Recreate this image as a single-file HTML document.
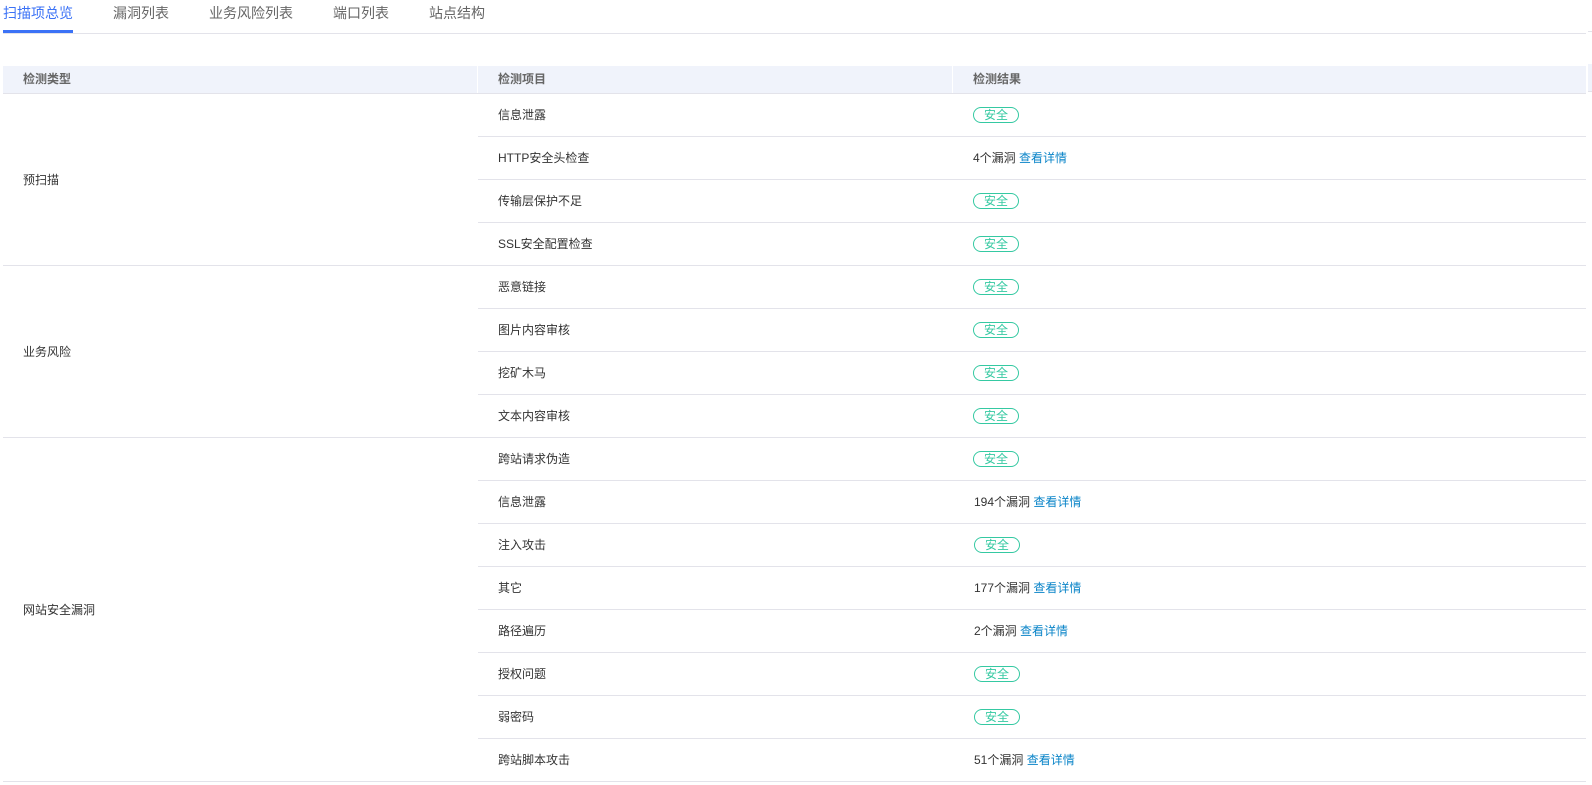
<!DOCTYPE html>
<html lang="zh">
<head>
<meta charset="utf-8">
<title>扫描项总览</title>
<style>
html,body{margin:0;padding:0;background:#fff;width:1592px;height:785px;overflow:hidden}
body{position:relative;font-family:"Liberation Sans","Noto Sans CJK SC",sans-serif;font-size:12px;color:#333}
.a{position:absolute;white-space:nowrap}
.tab{top:3px;font-size:14px;line-height:20px;color:#666}
.tab.on{color:#3b72f6}
.line{position:absolute;height:1px;background:#e3e3ea}
.t{line-height:18px}
.h{top:70px;color:#666;font-weight:bold;line-height:18px}
.badge{position:absolute;left:973px;width:44px;height:14px;border:1px solid #35c9a2;border-radius:8px;color:#35c9a2;line-height:14px;text-align:center}
.link{color:#0a84c8}
</style>
</head>
<body>
<div class="a tab on" style="left:3px">扫描项总览</div>
<div class="a tab" style="left:113px">漏洞列表</div>
<div class="a tab" style="left:209px">业务风险列表</div>
<div class="a tab" style="left:333px">端口列表</div>
<div class="a tab" style="left:429px">站点结构</div>
<div class="line" style="left:3px;top:33px;width:1583px"></div>
<div class="a" style="left:3px;top:30px;width:70px;height:3px;background:#3b72f6"></div>
<div class="a" style="left:1588px;top:31px;width:4px;height:1px;background:#e3e3ea"></div>

<div class="a" style="left:3px;top:66px;width:474px;height:27px;background:#f0f3fb"></div>
<div class="a" style="left:478px;top:66px;width:474px;height:27px;background:#f0f3fb"></div>
<div class="a" style="left:953px;top:66px;width:633px;height:27px;background:#f0f3fb"></div>
<div class="a" style="left:1588px;top:64px;width:4px;height:27px;background:#f0f3fb"></div>
<div class="a" style="left:1588px;top:91px;width:4px;height:1px;background:#e3e3ea"></div>
<div class="line" style="left:3px;top:93px;width:1583px"></div>
<div class="a h" style="left:23px">检测类型</div>
<div class="a h" style="left:498px">检测项目</div>
<div class="a h" style="left:973px">检测结果</div>

<div class="a t" style="left:23px;top:171px">预扫描</div>
<div class="a t" style="left:23px;top:343px">业务风险</div>
<div class="a t" style="left:23px;top:601px">网站安全漏洞</div>

<div class="line" style="left:478px;top:136px;width:1108px"></div>
<div class="line" style="left:478px;top:179px;width:1108px"></div>
<div class="line" style="left:478px;top:222px;width:1108px"></div>
<div class="line" style="left:3px;top:265px;width:1583px"></div>
<div class="line" style="left:478px;top:308px;width:1108px"></div>
<div class="line" style="left:478px;top:351px;width:1108px"></div>
<div class="line" style="left:478px;top:394px;width:1108px"></div>
<div class="line" style="left:3px;top:437px;width:1583px"></div>
<div class="line" style="left:478px;top:480px;width:1108px"></div>
<div class="line" style="left:478px;top:523px;width:1108px"></div>
<div class="line" style="left:478px;top:566px;width:1108px"></div>
<div class="line" style="left:478px;top:609px;width:1108px"></div>
<div class="line" style="left:478px;top:652px;width:1108px"></div>
<div class="line" style="left:478px;top:695px;width:1108px"></div>
<div class="line" style="left:478px;top:738px;width:1108px"></div>
<div class="line" style="left:3px;top:781px;width:1583px"></div>

<div class="a t" style="left:498px;top:106px">信息泄露</div>
<div class="a t" style="left:498px;top:149px">HTTP安全头检查</div>
<div class="a t" style="left:498px;top:192px">传输层保护不足</div>
<div class="a t" style="left:498px;top:235px">SSL安全配置检查</div>
<div class="a t" style="left:498px;top:278px">恶意链接</div>
<div class="a t" style="left:498px;top:321px">图片内容审核</div>
<div class="a t" style="left:498px;top:364px">挖矿木马</div>
<div class="a t" style="left:498px;top:407px">文本内容审核</div>
<div class="a t" style="left:498px;top:450px">跨站请求伪造</div>
<div class="a t" style="left:498px;top:493px">信息泄露</div>
<div class="a t" style="left:498px;top:536px">注入攻击</div>
<div class="a t" style="left:498px;top:579px">其它</div>
<div class="a t" style="left:498px;top:622px">路径遍历</div>
<div class="a t" style="left:498px;top:665px">授权问题</div>
<div class="a t" style="left:498px;top:708px">弱密码</div>
<div class="a t" style="left:498px;top:751px">跨站脚本攻击</div>

<div class="badge" style="top:107px">安全</div>
<div class="a t" style="left:973px;top:149px">4个漏洞 <span class="link">查看详情</span></div>
<div class="badge" style="top:193px">安全</div>
<div class="badge" style="top:236px">安全</div>
<div class="badge" style="top:279px">安全</div>
<div class="badge" style="top:322px">安全</div>
<div class="badge" style="top:365px">安全</div>
<div class="badge" style="top:408px">安全</div>
<div class="badge" style="top:451px">安全</div>
<div class="a t" style="left:974px;top:493px">194个漏洞 <span class="link">查看详情</span></div>
<div class="badge" style="top:537px;left:974px">安全</div>
<div class="a t" style="left:974px;top:579px">177个漏洞 <span class="link">查看详情</span></div>
<div class="a t" style="left:974px;top:622px">2个漏洞 <span class="link">查看详情</span></div>
<div class="badge" style="top:666px;left:974px">安全</div>
<div class="badge" style="top:709px;left:974px">安全</div>
<div class="a t" style="left:974px;top:751px">51个漏洞 <span class="link">查看详情</span></div>
</body>
</html>
